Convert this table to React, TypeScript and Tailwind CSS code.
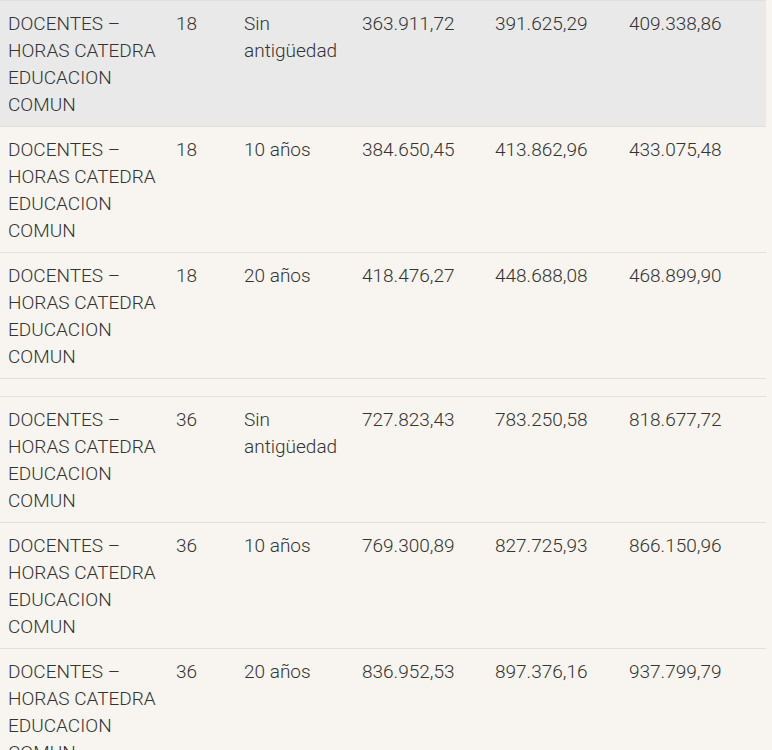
const label = 'DOCENTES – HORAS CATEDRA EDUCACION COMUN';

type Row = { hours: string; seniority: string; a: string; b: string; c: string } | null;

const rows: Row[] = [
  { hours: '18', seniority: 'Sin antigüedad', a: '363.911,72', b: '391.625,29', c: '409.338,86' },
  { hours: '18', seniority: '10 años', a: '384.650,45', b: '413.862,96', c: '433.075,48' },
  { hours: '18', seniority: '20 años', a: '418.476,27', b: '448.688,08', c: '468.899,90' },
  null,
  { hours: '36', seniority: 'Sin antigüedad', a: '727.823,43', b: '783.250,58', c: '818.677,72' },
  { hours: '36', seniority: '10 años', a: '769.300,89', b: '827.725,93', c: '866.150,96' },
  { hours: '36', seniority: '20 años', a: '836.952,53', b: '897.376,16', c: '937.799,79' },
];

const td = 'border-t border-[#e2e0dc] pl-2 pr-2 pt-[9px] pb-[8px] align-top';

export default function App() {
  return (
    <div className="min-h-screen bg-[#f8f5f1] pr-[6px] font-['Roboto',sans-serif] font-light text-[19px] leading-[27px] text-[#333333]">
      <table className="w-[766px] table-fixed border-separate border-spacing-0">
        <colgroup>
          <col className="w-[168px]" />
          <col className="w-[68px]" />
          <col className="w-[118px]" />
          <col className="w-[133px]" />
          <col className="w-[134px]" />
          <col className="w-[145px]" />
        </colgroup>
        <tbody>
          {rows.map((r, i) =>
            r ? (
              <tr key={i} className={i === 0 ? 'bg-[#e9e9e9]' : ''}>
                <td className={td}>{label}</td>
                <td className={td}>{r.hours}</td>
                <td className={td}>{r.seniority}</td>
                <td className={td}>{r.a}</td>
                <td className={td}>{r.b}</td>
                <td className={td}>{r.c}</td>
              </tr>
            ) : (
              <tr key={i}>
                <td colSpan={6} className="border-t border-[#e2e0dc] p-0">
                  <div className="h-[17px]" />
                </td>
              </tr>
            )
          )}
        </tbody>
      </table>
    </div>
  );
}
